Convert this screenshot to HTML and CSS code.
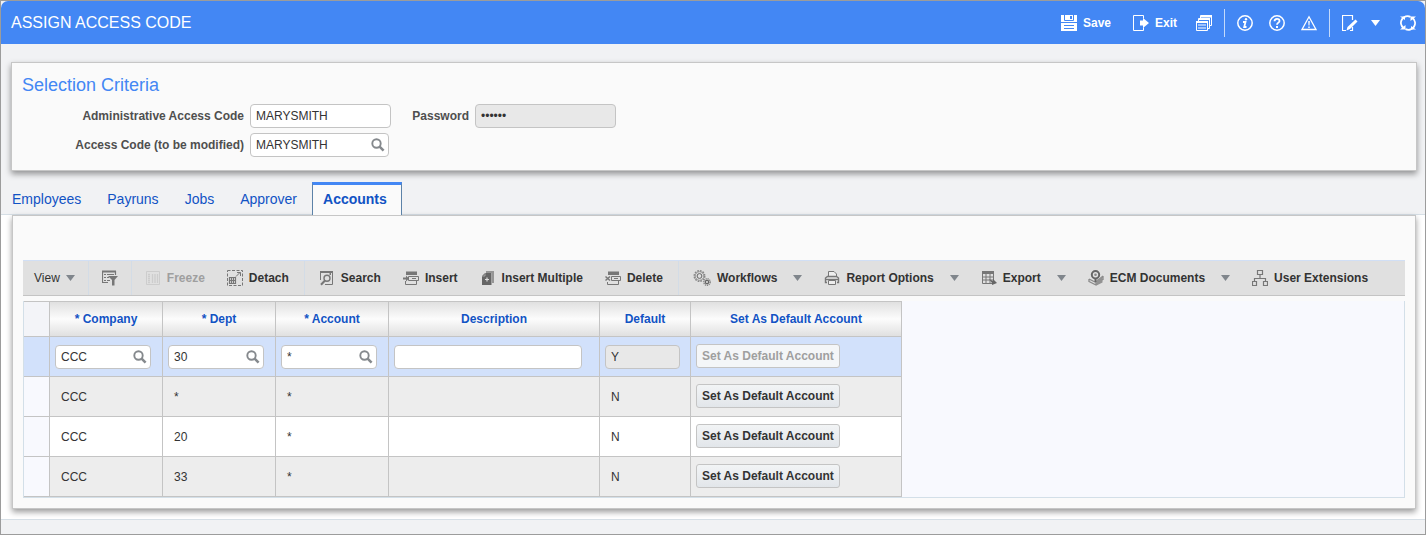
FILE: index.html
```html
<!DOCTYPE html>
<html lang="en">
<head>
    <meta charset="UTF-8">
    <meta name="viewport" content="width=device-width, initial-scale=1.0">
    <title>Assign Access Code</title>
    <link rel="stylesheet" href="styles.css">
</head>
<body>
    <!-- shared icons -->
    <svg width="0" height="0" class="sprite" aria-hidden="true">
        <symbol id="lens" viewBox="0 0 14 14">
            <circle cx="5.5" cy="5.5" r="4.2" fill="none" stroke="#85898d" stroke-width="1.9"/>
            <path d="M8.6 8.6L12.6 12.6" stroke="#85898d" stroke-width="2.6"/>
        </symbol>
        <symbol id="caret" viewBox="0 0 9 6">
            <path d="M0 0H9L4.5 6Z" fill="currentColor"/>
        </symbol>
    </svg>

    <div class="window">
        <header class="titlebar">
            <h1>ASSIGN ACCESS CODE</h1>
            <div class="title-actions">
                <button type="button" class="title-button labelled">
                    <svg width="16" height="16" viewBox="0 0 16 16">
                        <path d="M0 0H16V7H0Z M0 8H16V16H0Z" fill="#fff"/>
                        <path d="M3.500 0V5.500H12.500V0" fill="none" stroke="#4387f4"/>
                        <path d="M9 1H11V4H9Z M3 10H13V11H3Z M3 13H13V14H3Z" fill="#4387f4"/>
                    </svg>
                    Save
                </button>
                <button type="button" class="title-button labelled">
                    <svg width="16" height="16" viewBox="0 0 16 16">
                        <path d="M10.5 3.500V.5H.5V15.500H10.500V12.500" fill="none" stroke="#fff"/>
                        <path d="M7 5.500H10V3L16 8L10 13V10.500H7Z" fill="#fff"/>
                    </svg>
                    Exit
                </button>
                <button type="button" class="title-button" aria-label="Windows">
                    <svg width="16" height="16" viewBox="0 0 16 16">
                        <path d="M4.5 3V.5H15.500V10.500H14" fill="none" stroke="#fff"/>
                        <path d="M5 0H16V2.500H5Z" fill="#fff"/>
                        <path d="M2.500 6V3.500H13.500V13.500H12" fill="none" stroke="#fff"/>
                        <path d="M3 3H14V5H3Z" fill="#fff"/>
                        <path d="M.5 6.500H11.500V15.500H.5Z" fill="#4387f4" stroke="#fff"/>
                        <path d="M0 6H12V8H0Z M2 9.500H10V10.500H2Z M2 12.500H10V13.500H2Z" fill="#fff"/>
                    </svg>
                </button>
                <span class="title-sep"></span>
                <button type="button" class="title-button" aria-label="Information">
                    <svg width="16" height="16" viewBox="0 0 16 16" fill="none" stroke="#fff">
                        <circle cx="8" cy="8" r="7.200" stroke-width="1.500"/>
                        <path d="M6 7H8.500L7.200 12H9.500" stroke-width="1.800"/>
                        <circle cx="9" cy="4.200" r="1.200" fill="#fff" stroke="none"/>
                    </svg>
                </button>
                <button type="button" class="title-button" aria-label="Help">
                    <svg width="16" height="16" viewBox="0 0 16 16" fill="none" stroke="#fff">
                        <circle cx="8" cy="8" r="7.200" stroke-width="1.500"/>
                        <path d="M5.500 6.300C5.500 3 10.500 3 10.500 6C10.500 7.800 8 7.500 8 9.800" stroke-width="1.800"/>
                        <path d="M7 11H9V13H7Z" fill="#fff" stroke="none"/>
                    </svg>
                </button>
                <button type="button" class="title-button" aria-label="Warnings">
                    <svg width="16" height="16" viewBox="0 0 16 16">
                        <path d="M8 1.800L15 14.500H1Z" fill="none" stroke="#fff" stroke-width="1.300"/>
                        <path d="M7.200 6H8.800L8.500 10.500H7.500Z M7.300 11.500H8.700V13H7.300Z" fill="#fff"/>
                    </svg>
                </button>
                <span class="title-sep"></span>
                <button type="button" class="title-button" aria-label="Edit page">
                    <svg width="16" height="16" viewBox="0 0 16 16">
                        <path d="M10.500 5V.5H.5V15.500H4 M10.500 12V15.500H8" fill="none" stroke="#fff" stroke-width="1.200"/>
                        <path d="M4.500 15.500L5.500 12L13.500 4.500L15.500 6.500L8 14Z" fill="#fff"/>
                    </svg>
                </button>
                <button type="button" class="title-button menu" aria-label="Edit page menu">
                    <svg width="9" height="6"><use href="#caret"/></svg>
                </button>
                <button type="button" class="title-button" aria-label="Refresh">
                    <svg width="16" height="16" viewBox="0 0 16 16">
                        <path d="M3.500 13A6.600 6.600 0 0 1 10.500 1.900 M12.500 3A6.600 6.600 0 0 1 5.500 14.100" fill="none" stroke="#fff" stroke-width="1.900"/>
                        <path d="M0 14.500H5.500V10Z M16 1.500H10.500V6Z M11 11L16 14.500H11Z M5 5L0 1.500H5Z" fill="#fff"/>
                    </svg>
                </button>
            </div>
        </header>

        <section class="panel criteria">
            <h2>Selection Criteria</h2>
            <form class="criteria-form">
                <label for="adminCode">Administrative Access Code</label>
                <input type="text" id="adminCode" class="field" value="MARYSMITH">
                <label for="password">Password</label>
                <input type="password" id="password" class="field" value="secret" readonly>
                <label for="accessCode">Access Code (to be modified)</label>
                <div class="lookup">
                    <input type="text" id="accessCode" value="MARYSMITH">
                    <button type="button" aria-label="Search access code"><svg width="14" height="14"><use href="#lens"/></svg></button>
                </div>
            </form>
        </section>

        <nav class="tabs">
            <a href="#employees">Employees</a>
            <a href="#payruns">Payruns</a>
            <a href="#jobs">Jobs</a>
            <a href="#approver">Approver</a>
            <a href="#accounts" class="active">Accounts</a>
        </nav>

        <main class="tab-body">
            <section class="panel accounts">
                <div class="toolbar">
                    <button type="button" class="plain">View <svg class="caret" width="9" height="6"><use href="#caret"/></svg></button>
                    <span class="sep"></span>
                    <button type="button" aria-label="Query by example">
                        <svg width="16" height="16" viewBox="0 0 16 16" fill="none" stroke="#777">
                            <path d="M6 12.500H.5V1.500H13.500V5" stroke-width="1.200"/>
                            <path d="M0 1.500H14" stroke-width="2"/>
                            <path d="M2 4.500H4M5 4.500H12M2 7.500H4M5 7.500H7M2 10.500H4M5 10.500H8"/>
                            <path d="M6 6H16L12.500 10V15.500H10V10Z" fill="#777" stroke="none"/>
                        </svg>
                    </button>
                    <span class="sep"></span>
                    <button type="button" disabled>
                        <svg width="16" height="16" viewBox="0 0 16 16" fill="none" stroke="#cdcdcd">
                            <path d="M1.500 1.500H14.500V14.500H1.500Z"/>
                            <path d="M3 4.500H5M3 6.500H5M3 8.500H5M3 10.500H5M3 12.500H5M7.500 4V13M10 4V13M12.500 4V13" stroke-width="1.300"/>
                        </svg>
                        Freeze
                    </button>
                    <button type="button">
                        <svg width="16" height="16" viewBox="0 0 16 16" fill="none" stroke="#777">
                            <path d="M.5 .5H15.500V15.500H.5Z" stroke-dasharray="3 1.500"/>
                            <path d="M2.500 7.500H8.500V13.500H2.500ZM2.500 10.500H8.500M4.500 8V13M6.500 8V13" stroke-width="1.200"/>
                            <path d="M9 6.500L13 2.500M10 2.500H13.500V6"/>
                        </svg>
                        Detach
                    </button>
                    <span class="sep wide"></span>
                    <button type="button">
                        <svg width="16" height="16" viewBox="0 0 16 16" fill="none" stroke="#777">
                            <path d="M1.500 10V1.500H13.500V14.500H6"/>
                            <path d="M1 2H14M10.500 4H12" stroke-width="2"/>
                            <circle cx="8" cy="8.300" r="3" stroke-width="1.400"/>
                            <path d="M6 10.500L2 14.700" stroke-width="2"/>
                        </svg>
                        Search
                    </button>
                    <button type="button">
                        <svg width="16" height="16" viewBox="0 0 16 16" fill="none" stroke="#777">
                            <path d="M3 1.500H14V5H3Z" fill="#777" stroke="none"/>
                            <path d="M5.500 6.500H15.500V10.500H5.500ZM9 8.500H13M2.500 11V14.500H13.500V11"/>
                            <path d="M0 7.500H3V5.500L6 8.500L3 11.500V9.500H0Z" fill="#777" stroke="none"/>
                        </svg>
                        Insert
                    </button>
                    <button type="button">
                        <svg width="16" height="16" viewBox="0 0 16 16">
                            <path d="M6 1H14V13H12V3H6Z" fill="#969696"/>
                            <path d="M2 6L5 3H11.500V15H2Z" fill="#666"/>
                            <path d="M2 6H5V3" fill="none" stroke="#bbb" stroke-width=".7"/>
                            <path d="M7 7.500V11.500M5 9.500H9" stroke="#ddd" stroke-width="1.200"/>
                        </svg>
                        Insert Multiple
                    </button>
                    <button type="button">
                        <svg width="16" height="16" viewBox="0 0 16 16" fill="none" stroke="#777">
                            <path d="M3 1.500H14V5H3Z" fill="#777" stroke="none"/>
                            <path d="M6.500 6.500H15.500V10.500H6.500ZM9 8.500H13M2.500 12V14.500H13.500V11"/>
                            <path d="M.5 6.500L5 10.500M5 6.500L.5 10.500" stroke-width="1.500"/>
                        </svg>
                        Delete
                    </button>
                    <span class="sep wide"></span>
                    <button type="button" class="has-menu">
                        <svg width="18" height="16" viewBox="0 0 18 16" fill="none" stroke="#888">
                            <circle cx="6.500" cy="6" r="5.200" stroke-width="1.600" stroke-dasharray="1.700 1"/>
                            <circle cx="6.500" cy="6" r="4.300" stroke-width=".8"/>
                            <circle cx="6.500" cy="6" r="2.400" stroke="#666"/>
                            <circle cx="14" cy="12" r="3.200" stroke-width="1.500" stroke-dasharray="1.200 .7"/>
                            <circle cx="14" cy="12" r="1.700" stroke="#666" stroke-width="1.300"/>
                        </svg>
                        Workflows
                        <svg class="caret" width="9" height="6"><use href="#caret"/></svg>
                    </button>
                    <button type="button" class="has-menu">
                        <svg width="16" height="16" viewBox="0 0 16 16" fill="none" stroke="#777">
                            <path d="M4.500 6V1.500H10L12.500 4V6" fill="#eee"/>
                            <path d="M3 12.500H1.500V8L3.500 6.500H12.500L14.500 8V12.500H13" stroke-width="1.400"/>
                            <path d="M2 9.500H14" stroke-width="1.300"/>
                            <path d="M4.500 10.500H11.500V14.500H4.500Z" fill="#eee"/>
                        </svg>
                        Report Options
                        <svg class="caret" width="9" height="6"><use href="#caret"/></svg>
                    </button>
                    <button type="button" class="has-menu">
                        <svg width="16" height="16" viewBox="0 0 16 16" fill="none" stroke="#777">
                            <path d="M1.500 2.500H12.500V13.500H1.500ZM5 4V13M9 4V13M1.500 7H12M1.500 10H12"/>
                            <path d="M1 2.500H13" stroke-width="3"/>
                            <path d="M8 9L12 11V9L16 13L11 15V13Z" fill="#666" stroke="none"/>
                        </svg>
                        Export
                        <svg class="caret" width="9" height="6"><use href="#caret"/></svg>
                    </button>
                    <button type="button" class="has-menu">
                        <svg width="16" height="16" viewBox="0 0 16 16" fill="none" stroke="#777">
                            <path d="M1 9L8 12.500L15 6M1 11.500L8 15L15 9M1 9V12M8 12V15M15 6V10" stroke="#8a8a8a" stroke-width="1.300"/>
                            <path d="M8.500 10L14.500 6.500V12.500L8.500 15.500Z" fill="#929292" stroke="none"/>
                            <circle cx="7.500" cy="4.700" r="3.700" fill="#e0e0e0" stroke="#666" stroke-width="2"/>
                            <circle cx="7.500" cy="4.700" r="1.300" fill="#888" stroke="none"/>
                            <path d="M7.500 8.500V12" stroke="#666" stroke-width="2"/>
                        </svg>
                        ECM Documents
                        <svg class="caret" width="9" height="6"><use href="#caret"/></svg>
                    </button>
                    <button type="button">
                        <svg width="16" height="16" viewBox="0 0 16 16" fill="none" stroke="#777">
                            <path d="M5.500 .5H10.500V4.500H5.500ZM.5 11.500H4.500V15.500H.5ZM11.500 11.500H15.500V15.500H11.500ZM8 5V8.500M2.500 11V8.500H13.500V11" stroke-width="1.200"/>
                        </svg>
                        User Extensions
                    </button>
                </div>

                <div class="grid">
                    <table>
                        <colgroup>
                            <col class="col-select">
                            <col class="col-code">
                            <col class="col-code">
                            <col class="col-code">
                            <col class="col-wide">
                            <col class="col-flag">
                            <col class="col-wide">
                        </colgroup>
                        <thead>
                            <tr>
                                <td></td>
                                <th>* Company</th>
                                <th>* Dept</th>
                                <th>* Account</th>
                                <th>Description</th>
                                <th>Default</th>
                                <th>Set As Default Account</th>
                            </tr>
                        </thead>
                        <tbody>
                            <tr class="selected">
                                <td></td>
                                <td>
                                    <div class="lookup">
                                        <input type="text" aria-label="Company" value="CCC">
                                        <button type="button" aria-label="Search company"><svg width="14" height="14"><use href="#lens"/></svg></button>
                                    </div>
                                </td>
                                <td>
                                    <div class="lookup">
                                        <input type="text" aria-label="Dept" value="30">
                                        <button type="button" aria-label="Search dept"><svg width="14" height="14"><use href="#lens"/></svg></button>
                                    </div>
                                </td>
                                <td>
                                    <div class="lookup">
                                        <input type="text" aria-label="Account" value="*">
                                        <button type="button" aria-label="Search account"><svg width="14" height="14"><use href="#lens"/></svg></button>
                                    </div>
                                </td>
                                <td><input type="text" class="field description" aria-label="Description"></td>
                                <td><input type="text" class="field flag" aria-label="Default" value="Y" readonly></td>
                                <td><button type="button" class="default-button" disabled>Set As Default Account</button></td>
                            </tr>
                            <tr>
                                <td></td>
                                <td class="text">CCC</td>
                                <td class="text">*</td>
                                <td class="text">*</td>
                                <td></td>
                                <td class="text">N</td>
                                <td><button type="button" class="default-button">Set As Default Account</button></td>
                            </tr>
                            <tr>
                                <td></td>
                                <td class="text">CCC</td>
                                <td class="text">20</td>
                                <td class="text">*</td>
                                <td></td>
                                <td class="text">N</td>
                                <td><button type="button" class="default-button">Set As Default Account</button></td>
                            </tr>
                            <tr>
                                <td></td>
                                <td class="text">CCC</td>
                                <td class="text">33</td>
                                <td class="text">*</td>
                                <td></td>
                                <td class="text">N</td>
                                <td><button type="button" class="default-button">Set As Default Account</button></td>
                            </tr>
                        </tbody>
                    </table>
                </div>
            </section>
        </main>
    </div>
</body>
</html>
```
FILE: styles.css
```css
* {
    box-sizing: border-box;
}

body {
    margin: 0;
    font-family: "Liberation Sans", Arial, sans-serif;
    font-size: 12px;
    color: #333;
    background-color: #f1f2f4;
}

button,
input {
    font-family: inherit;
    font-size: 12px;
    color: inherit;
}

svg {
    display: block;
    flex: none;
}

.sprite {
    position: absolute;
}

.window {
    min-height: 100vh;
    border: 1px solid #9c9c9c;
}

/* title bar */
.titlebar {
    display: flex;
    justify-content: space-between;
    align-items: center;
    height: 43px;
    padding: 0 1px 0 10px;
    background-color: #4387f4;
    border-radius: 7px 7px 0 0;
    color: #fff;
}

h1 {
    margin: 0;
    font-size: 16px;
    font-weight: normal;
}

.title-actions {
    display: flex;
    align-items: center;
}

.title-button {
    display: flex;
    align-items: center;
    gap: 6px;
    height: 28px;
    padding: 0 8px;
    border: none;
    background: none;
    font-weight: bold;
    cursor: pointer;
}

.title-button.labelled {
    padding: 0 11px;
}

.title-button.menu {
    padding: 0 12px 0 5px;
}

.title-sep {
    width: 1px;
    height: 28px;
    margin: 0 4px;
    background-color: #c4dafb;
}

/* panels */
.panel {
    background-color: #fafafa;
    border: 1px solid #c6c6c6;
    box-shadow: 0 3px 6px rgba(0, 0, 0, 0.4);
}

.criteria {
    margin: 18px 8px 11px 10px;
    padding: 10px 10px 13px;
}

h2 {
    margin: 0 0 7px;
    font-size: 18px;
    line-height: 24px;
    font-weight: normal;
    color: #4387f4;
}

.criteria-form {
    display: grid;
    grid-template-columns: 222px 141px 72px 141px;
    gap: 5px 6px;
    align-items: center;
}

.criteria-form label {
    text-align: right;
    font-weight: bold;
    color: #4f4f4f;
}

.field,
.lookup {
    height: 24px;
    border: 1px solid #c4c4c4;
    border-radius: 4px;
    background-color: #fff;
}

.field {
    display: block;
    width: 100%;
    padding: 0 5px;
}

.field[readonly] {
    background-color: #e8e8e8;
}

.lookup {
    display: flex;
    align-items: center;
    width: 139px;
}

.lookup input {
    flex: 1;
    min-width: 0;
    padding: 0 0 0 5px;
    border: none;
    background: none;
    outline: none;
}

.lookup button {
    padding: 0 3px;
    border: none;
    background: none;
    cursor: pointer;
}

/* tabs */
.tabs {
    display: flex;
    margin-bottom: -1px;
    padding-left: 2px;
    font-size: 14px;
    line-height: 28px;
}

.tabs a {
    padding: 3px 13px 2px;
    color: #1253c4;
    text-decoration: none;
}

.tabs a:first-child {
    padding-left: 9px;
}

.tabs a.active {
    position: relative;
    margin-left: 2px;
    padding: 0 14px 2px 10px;
    border: 1px solid #5c82a8;
    border-top: 3px solid #4387f4;
    border-bottom: none;
    background-color: #fafafa;
    font-weight: bold;
}

.tab-body {
    padding: 0 9px 10px 11px;
    background-color: #fff;
    border-top: 1px solid #d6dfe6;
    border-bottom: 1px solid #d6dfe6;
}

.accounts {
    padding: 44px 10px 10px;
    padding-left: 10px;
}

/* toolbar */
.toolbar {
    display: flex;
    align-items: center;
    height: 36px;
    margin-bottom: 5px;
    background-color: #e0e0e0;
    border-top: 1px solid #d1dff5;
    border-bottom: 1px solid #c4c4c4;
}

.toolbar button {
    display: flex;
    align-items: center;
    gap: 6px;
    height: 28px;
    padding: 0 11px;
    border: none;
    background: none;
    font-weight: bold;
    white-space: nowrap;
    cursor: pointer;
}

.toolbar .plain {
    font-weight: normal;
}

.toolbar button:disabled {
    color: #9f9f9f;
}

.caret {
    color: #80868c;
}

.has-menu .caret {
    margin-left: 10px;
}

.sep {
    align-self: stretch;
    width: 1px;
    margin: 0 2px;
    background-color: #d3dce6;
}

.sep.wide {
    margin: 0 3px 0 4px;
}

/* accounts table */
.grid {
    background-color: #f8f9fe;
    border: 1px solid #d3dfe8;
    border-top: none;
}

table {
    table-layout: fixed;
    width: 878px;
    border-collapse: separate;
    border-spacing: 0;
}

.col-select {
    width: 26px;
}

.col-code {
    width: 113px;
}

.col-wide {
    width: 211px;
}

.col-flag {
    width: 91px;
}

th,
td {
    height: 40px;
    padding: 0 5px;
    border-right: 1px solid #c4c4c4;
    border-bottom: 1px solid #c4c4c4;
}

thead th,
thead td {
    height: 36px;
    border-top: 1px solid #c4c4c4;
}

th {
    color: #1253c4;
    background: linear-gradient(#e0e0e0, #fcfcfc 50%, #e0e0e0);
}

thead td {
    background-color: #f3f4f8;
}

tbody td {
    background-color: #fff;
}

tbody tr:nth-child(even) td,
tbody tr:last-child td {
    background-color: #ededed;
}

tbody tr td:first-child,
tbody tr:nth-child(even) td:first-child {
    background-color: #f8f9fe;
}

tbody tr.selected td,
tbody tr.selected td:first-child {
    background-color: #d2e1fb;
}

td.text {
    padding-left: 11px;
}

td .lookup {
    width: 96px;
}

.description {
    width: 188px;
}

.flag {
    width: 75px;
}

.default-button {
    display: block;
    height: 24px;
    margin-bottom: 2px;
    padding: 0 5px;
    border: 1px solid #c4c4c4;
    border-radius: 3px;
    background: linear-gradient(#f2f4f5, #e2e6ea);
    font-weight: bold;
    white-space: nowrap;
    cursor: pointer;
}

.default-button:disabled {
    background: #f4f6f8;
    color: #9f9f9f;
}
```
